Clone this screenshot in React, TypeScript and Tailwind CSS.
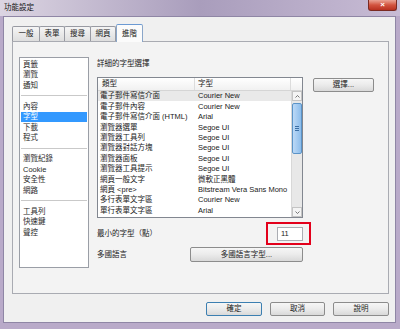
import React from "react";

const sideGroups = [
  ["頁籤", "瀏覽", "通知"],
  ["內容", "字型", "下載", "程式"],
  ["瀏覽紀錄", "Cookie", "安全性", "網路"],
  ["工具列", "快速鍵", "聲控"],
];

const fontRows = [
  ["電子郵件寫信介面", "Courier New"],
  ["電子郵件內容", "Courier New"],
  ["電子郵件寫信介面 (HTML)", "Arial"],
  ["瀏覽器選單", "Segoe UI"],
  ["瀏覽器工具列", "Segoe UI"],
  ["瀏覽器對話方塊", "Segoe UI"],
  ["瀏覽器面板", "Segoe UI"],
  ["瀏覽器工具提示", "Segoe UI"],
  ["網頁一般文字", "微軟正黑體"],
  ["網頁 <pre>", "Bitstream Vera Sans Mono"],
  ["多行表單文字區", "Courier New"],
  ["單行表單文字區", "Arial"],
];

const tabs = [
  ["一般", "w-[28px]"],
  ["表單", "w-[26px]"],
  ["搜尋", "w-[27px]"],
  ["網頁", "w-[26px]"],
];

function Btn({ label, w, focus }: { label: string; w: string; focus?: boolean }) {
  return (
    <div
      className={`${w} h-[14px] rounded-[2px] border ${focus ? "border-[#3c7fb1]" : "border-[#8c8c8c]"} bg-gradient-to-b from-[#f6f6f6] via-[#ebebeb] to-[#d9d9d9] flex items-center justify-center text-[7.5px] leading-none text-[#222] whitespace-nowrap`}
    >
      {label}
    </div>
  );
}

export default function App() {
  return (
    <div className="w-[400px] h-[329px] flex flex-col bg-[#b9aac9] font-['Liberation_Sans','Noto_Sans_CJK_TC',sans-serif] text-[#1a1a1a] overflow-hidden">
      {/* title bar */}
      <div className="h-[16px] relative flex items-center pl-[4px] bg-gradient-to-r from-[#dcd5e2] via-[#a99dbc] to-[#c8bcd5]">
        <span className="text-[7.5px] leading-none text-[#111]">功能設定</span>
        <div className="absolute top-0 right-[3px] w-[29px] h-[11px] rounded-b-[3px] border border-t-0 border-[#7a2a22] bg-gradient-to-b from-[#e9a294] via-[#d2533f] to-[#b8301f] flex items-center justify-center text-white text-[8px] font-bold leading-none">
          ×
        </div>
      </div>

      {/* dialog body */}
      <div className="flex-1 ml-[3px] mr-[4px] mb-[6px] bg-[#f0f0f0] border border-[#8f86a5] flex flex-col pt-[7px] pl-[8px] pr-[6px]">
        {/* tabs */}
        <div className="h-[17px] flex items-end">
          {tabs.map(([t, w]) => (
            <div
              key={t}
              className={`${w} h-[15px] -mr-px border border-b-0 border-[#989aa2] rounded-t-[2px] bg-gradient-to-b from-[#f5f5f5] to-[#dedede] flex items-center justify-center text-[7.5px] leading-none whitespace-nowrap`}
            >
              {t}
            </div>
          ))}
          <div className="h-[18px] ml-[1px] w-[27px] border border-b-0 border-[#8aa6c9] border-t-[#6c9ad3] rounded-t-[2px] bg-[#fbfbfb] flex items-center justify-center text-[7.5px] leading-none -mb-px relative z-10 whitespace-nowrap">
            進階
          </div>
        </div>

        {/* panel */}
        <div className="h-[253px] border border-[#a9abb2] bg-[#f3f3f3] flex pt-[15px] pl-[6px]">
          {/* side list */}
          <div className="w-[70px] h-[211px] border border-[#9a9ea6] bg-white pt-[1px] px-[1px]">
            {sideGroups.map((g, gi) => (
              <div key={gi}>
                {gi > 0 && (
                  <div className="h-[10.5px] flex items-center">
                    <div className="h-px w-full bg-[#c9c9c9]" />
                  </div>
                )}
                {g.map((it) => (
                  <div
                    key={it}
                    className={`h-[10.5px] flex items-center pl-[2px] text-[7.5px] leading-none ${it === "字型" ? "bg-[#3399ff] text-white" : "text-[#2a2a2a]"}`}
                  >
                    {it}
                  </div>
                ))}
              </div>
            ))}
          </div>

          {/* right side */}
          <div className="ml-[8px] flex flex-col">
            <div className="h-[12px] mt-[1px] flex items-center text-[7.5px] leading-none">詳細的字型選擇</div>
            <div className="mt-[7px] flex items-start">
              {/* listbox */}
              <div className="w-[206px] h-[141px] border border-[#828790] bg-white flex flex-col">
                <div className="h-[13px] flex border-b border-[#d5d5d5] bg-gradient-to-b from-white to-[#f1f1f1] text-[7.5px] leading-none">
                  <div className="w-[97px] border-r border-[#dcdcdc] flex items-center pl-[4px]">類型</div>
                  <div className="w-[96px] border-r border-[#dcdcdc] flex items-center pl-[3px]">字型</div>
                  <div className="flex-1" />
                </div>
                <div className="flex-1 flex">
                  <div className="flex-1 overflow-hidden">
                    {fontRows.map(([a, b], i) => (
                      <div
                        key={i}
                        className={`h-[10.4px] flex items-center text-[7.5px] leading-none ${i === 0 ? "bg-[#e9e9e9]" : ""}`}
                      >
                        <div className="w-[98px] shrink-0 pl-[2px] whitespace-nowrap">{a}</div>
                        <div className="pl-[2px] whitespace-nowrap">{b}</div>
                      </div>
                    ))}
                  </div>
                  {/* scrollbar */}
                  <div className="w-[11px] bg-[#e8e8e8] border-l border-[#d8d8d8] flex flex-col">
                    <div className="h-[10px] flex items-center justify-center border border-[#c4c4c4] bg-[#f4f4f4]">
                      <svg width="5" height="3" viewBox="0 0 5 3"><path d="M0.5 2.5 L2.5 0.5 L4.5 2.5" fill="none" stroke="#555" strokeWidth="0.8" /></svg>
                    </div>
                    <div className="h-[2px]" />
                    <div className="h-[51px] rounded-[2px] border border-[#5b94c8] bg-gradient-to-r from-[#bcd9f6] to-[#8dbdeb] flex flex-col items-center justify-center gap-[1px]">
                      <div className="w-[4px] h-px bg-[#3b6fa5]" />
                      <div className="w-[4px] h-px bg-[#3b6fa5]" />
                      <div className="w-[4px] h-px bg-[#3b6fa5]" />
                    </div>
                    <div className="flex-1" />
                    <div className="h-[10px] flex items-center justify-center border border-[#c4c4c4] bg-[#f4f4f4]">
                      <svg width="5" height="3" viewBox="0 0 5 3"><path d="M0.5 0.5 L2.5 2.5 L4.5 0.5" fill="none" stroke="#555" strokeWidth="0.8" /></svg>
                    </div>
                  </div>
                </div>
              </div>
              <div className="ml-[10px] mt-[1px]">
                <Btn label="選擇..." w="w-[61px]" />
              </div>
            </div>

            {/* minimum font size */}
            <div className="w-[206px] mt-[9px] flex items-center justify-between">
              <span className="text-[7.5px] leading-none">最小的字型（點）</span>
              <div className="relative">
                <div className="w-[26px] h-[14px] border border-[#abadb3] bg-white flex items-center pl-[3px] text-[7.5px] leading-none">11</div>
                <div className="absolute -left-[11px] -right-[8px] -top-[5px] -bottom-[4px] border-2 border-[#e3001b]" />
              </div>
            </div>

            {/* languages */}
            <div className="w-[206px] mt-[6px] flex items-center justify-between">
              <span className="text-[7.5px] leading-none">多國語言</span>
              <div className="h-[15px]">
                <Btn label="多國語言字型..." w="w-[113px] !h-[15px]" />
              </div>
            </div>
          </div>
        </div>

        {/* bottom buttons */}
        <div className="mt-[8px] flex justify-end gap-[8px]">
          <Btn label="確定" w="w-[56px]" focus />
          <Btn label="取消" w="w-[55px]" />
          <Btn label="說明" w="w-[56px]" />
        </div>
      </div>
    </div>
  );
}
